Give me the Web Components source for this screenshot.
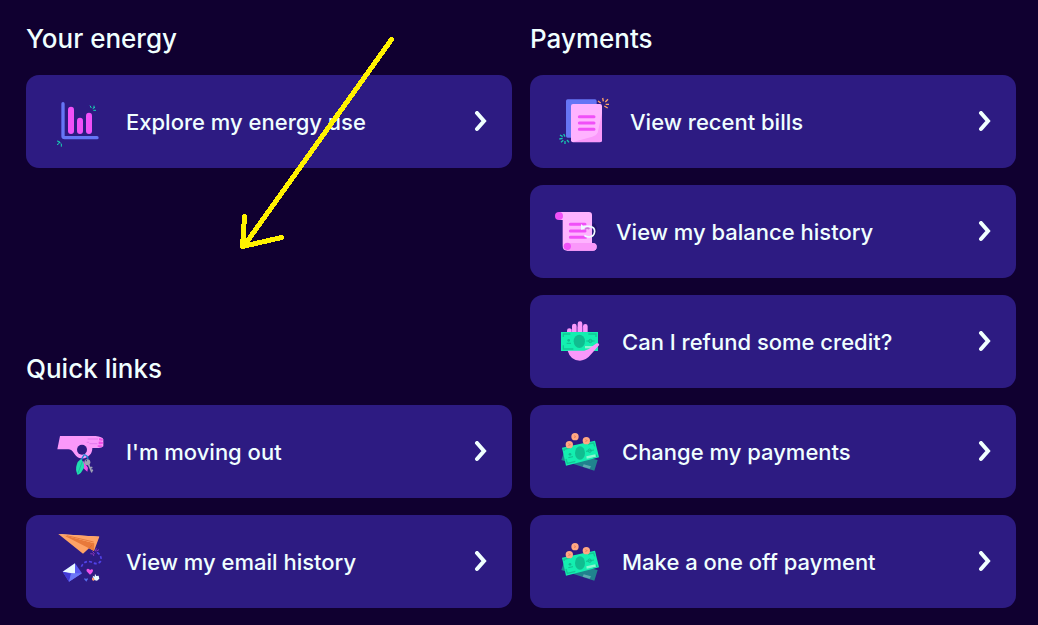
<!DOCTYPE html>
<html lang="en">
<head>
<meta charset="utf-8">
<meta name="viewport" content="width=device-width, initial-scale=1">
<title>My account</title>
<style>
  body {
    margin: 0;
    background: #100030;
    color: #f0ffff;
    font-family: Inter, "Open Sans", "Liberation Sans", sans-serif;
  }
</style>
</head>
<body>
<account-dashboard>
  <link-section slot="left" heading="Your energy">
    <link-card icon="chart">Explore my energy use</link-card>
  </link-section>
  <link-section slot="left" heading="Quick links">
    <link-card icon="keys">I'm moving out</link-card>
    <link-card icon="plane">View my email history</link-card>
  </link-section>
  <link-section slot="right" heading="Payments">
    <link-card icon="bills">View recent bills</link-card>
    <link-card icon="scroll">View my balance history</link-card>
    <link-card icon="refund">Can I refund some credit?</link-card>
    <link-card icon="cash">Change my payments</link-card>
    <link-card icon="cash">Make a one off payment</link-card>
  </link-section>
</account-dashboard>

<script>
// Artwork is drawn at 3 units per pixel
const ICONS = {
  chart: { width: 58, viewBox: '30 18 174 183', art: `
    <path d="M69 56V153Q69 158 74 158H171" fill="none" stroke="#6675f5" stroke-width="10" stroke-linecap="round" stroke-linejoin="round"/>
    <g fill="#f050f8">
      <rect x="84" y="65" width="18" height="82" rx="9"/>
      <rect x="111" y="98" width="18" height="49" rx="9"/>
      <rect x="138" y="83" width="18" height="64" rx="9"/>
    </g>
    <path d="M150 62L154 69M162 62V69M158 71L165 67M160 76H168M51 168L59 170M51 179L58 175M64 176V185M55 171L62 174" fill="none" stroke="#18d5b5" stroke-width="3"/>` },
  bills: { width: 58, viewBox: '27 18 174 183', art: `
    <rect x="63" y="43" width="92" height="115" rx="5" fill="#6675f5"/>
    <rect x="78" y="57" width="93" height="115" rx="6" fill="#ffb3ff"/>
    <path d="M171 84L158 143Q154 152 142 155L84 171H165Q171 171 171 165Z" fill="#fa98fa"/>
    <path d="M103 95H147M103 114H147M103 133H147" stroke="#f050f8" stroke-width="9" stroke-linecap="round"/>
    <path d="M159 48L167 54M173 39L175 49M189 43L181 51M182 58H192M178 63L188 69" stroke="#ffa366" stroke-width="4"/>
    <path d="M45 150L53 155M56 147L60 155M43 162L53 160M48 172L55 166M60 168V177M66 165L72 172" stroke="#18c5b0" stroke-width="4"/>` },
  scroll: { width: 44, viewBox: '27 18 132 183', art: `
    <path d="M42 51H132Q141 51 141 60V145H143Q155 145 155 155Q155 167 143 167H66Q53 167 53 153V75H42Z" fill="#ffb3ff"/>
    <path d="M67 144H144Q155 145 155 155Q155 167 143 167H66Z" fill="#fa98fa"/>
    <circle cx="42" cy="63" r="12" fill="#f050f8"/>
    <circle cx="67" cy="154" r="11" fill="#f050f8"/>
    <path d="M76 88H120M76 108H120M76 127H122" stroke="#f050f8" stroke-width="9" stroke-linecap="round"/>
    <path d="M145 86Q158 105 146 122" fill="none" stroke="#24136b" stroke-width="8"/>
    <path d="M115 94H134Q149 96 149 109Q148 124 133 126Q123 126 118 121" fill="none" stroke="#effcff" stroke-width="5"/>
    <path d="M108 87V104L124 101Z" fill="#effcff"/>
    <path d="M120 103Q127 96 133 102" fill="none" stroke="#ca78d7" stroke-width="5"/>` },
  refund: { width: 50, viewBox: '27 18 150 183', art: `
    <path d="M73 77V90M88 63V90M105 56V90M121 64V90" stroke="#fa98fa" stroke-width="14" stroke-linecap="round"/>
    <path d="M80 72V85M97 65V85M114 65V85" stroke="#d86bea" stroke-width="2"/>
    <rect x="48" y="81" width="111" height="57" fill="#14efb0"/>
    <path d="M55 96V87H76M130 87H153V96M55 121V132H85" fill="none" stroke="#12c795" stroke-width="4"/>
    <ellipse cx="103" cy="109" rx="17" ry="20" fill="#10bd90"/>
    <circle cx="71" cy="106" r="4" fill="#10bd90"/>
    <path d="M65 115H78M124 108H149" stroke="#10bd90" stroke-width="3"/>
    <circle cx="136" cy="108" r="5" fill="none" stroke="#10bd90" stroke-width="3"/>
    <path d="M120 123H146V130H120Z" fill="#8cf5d0"/>
    <path d="M68 137H118Q132 135 142 124L155 115Q164 114 162 121L139 147Q124 166 105 167Q76 166 68 137Z" fill="#fa98fa"/>` },
  keys: { width: 58, viewBox: '30 18 174 183', art: `
    <path d="M60 63H167Q187 65 190 73V94Q186 99 176 99H157Q157 113 149 120Q138 132 123 130Q111 128 103 116Q95 103 85 103H52Z" fill="#fa98fa"/>
    <circle cx="126" cy="104" r="15" fill="#2d1b82"/>
    <path d="M143 72H174M148 86H172M140 82H147" stroke="#d86bea" stroke-width="2"/>
    <path d="M177 70Q188 69 190 75Q187 79 177 76M176 80Q190 79 190 85Q186 89 176 87M173 91Q188 89 188 94Q184 97 173 95" fill="#ee50e7"/>
    <path d="M131 119Q143 120 144 133M124 137Q126 127 132 121" fill="none" stroke="#1688d0" stroke-width="4"/>
    <path d="M129 137L144 158L142 170L127 157Z" fill="#f050e8"/>
    <path d="M123 132Q137 148 130 162Q125 174 113 180Q105 164 110 150Q113 138 123 132Z" fill="#20deb0"/>
    <path d="M127 140L114 174" stroke="#19bb9d" stroke-width="3"/>
    <circle cx="142" cy="142" r="9" fill="#9da1b5"/>
    <circle cx="139" cy="137" r="2" fill="#2d1b82"/>
    <path d="M145 147L156 172M150 160L157 157M153 167L159 165" stroke="#9da1b5" stroke-width="5"/>` },
  plane: { width: 58, viewBox: '30 30 174 183', art: `
    <path d="M55 39L178 47L162 90L147 82L129 98Z" fill="#ffa366"/>
    <path d="M55 39L178 47L144 66Z" fill="#ffb17a"/>
    <path d="M69 42L163 67L162 90L147 82Z" fill="#e8793b"/>
    <path d="M69 42L178 47L163 67Z" fill="#ffa366"/>
    <path d="M80 44L161 63M147 82L156 72" stroke="#d9662a" stroke-width="2"/>
    <path d="M157 91L164 98M169 82L166 91M151 98L159 99M169 90L177 86M161 98V105" stroke="#8736b8" stroke-width="3"/>
    <path d="M171 94Q187 105 182 120Q174 134 154 123Q132 116 123 140" fill="none" stroke="#5142e8" stroke-width="5" stroke-dasharray="9 6"/>
    <path d="M68 152L105 127L126 157L87 182Z" fill="#5a59ef"/>
    <path d="M68 152L105 127L105 158Z" fill="#eafaff"/>
    <path d="M68 152L93 158L87 182Z" fill="#4239d5"/>
    <path d="M93 158L105 157L126 157L87 182Z" fill="#6c78f6"/>
    <path d="M150 161L140 151Q138 143 144 143Q149 144 150 148Q154 142 159 146Q160 153 150 161Z" fill="#f050e8"/>
    <path d="M139 182L132 174Q134 170 138 174Q143 169 144 174Z" fill="#566bea"/>
    <path d="M162 177L158 164L164 167L165 158L169 165L176 164L178 173L171 179Z" fill="#eafaff"/>
    <path d="M156 169L164 174L161 180L156 177Z" fill="#ff9770"/>` },
  cash: { width: 50, viewBox: '27 18 150 183', art: `
    <path d="M58 109L158 135L148 167L49 135Z" fill="#20828e"/>
    <path d="M116 148L138 154L134 161L113 155Z" fill="#5cabb0"/>
    <path d="M51 98L150 77L162 127L63 152Z" fill="#14efb0"/>
    <path d="M58 108L57 103L74 99M129 87L146 84L149 94M63 132L67 145L91 139M153 119L155 123L143 127" fill="none" stroke="#12c795" stroke-width="4"/>
    <ellipse cx="105" cy="114" rx="15" ry="20" fill="#10bd90"/>
    <circle cx="75" cy="118" r="4" fill="#10bd90"/>
    <path d="M70 128L84 125M123 109L147 105" stroke="#10bd90" stroke-width="3"/>
    <circle cx="134" cy="107" r="5" fill="none" stroke="#10bd90" stroke-width="3"/>
    <path d="M124 124L151 118L153 125L125 131Z" fill="#8cf5d0"/>
    <g fill="#ffa783">
      <circle cx="90" cy="65" r="11"/><circle cx="73" cy="89" r="11"/><circle cx="124" cy="77" r="11"/>
    </g>
    <path d="M87 62L93 65L87 68M70 86L76 89L70 92M121 74L127 77L121 80" fill="none" stroke="#ed825f" stroke-width="3"/>` },
};

class LinkCard extends HTMLElement {
  constructor() {
    super();
    this.attachShadow({ mode: 'open' });
  }

  connectedCallback() {
    const icon = ICONS[this.getAttribute('icon')];
    this.shadowRoot.innerHTML = `
      <style>
        :host { display: block; }

        a {
          display: flex;
          align-items: center;
          gap: 18px;
          box-sizing: border-box;
          min-height: 93px;
          padding: 16px 24px;
          border-radius: 13px;
          background: #2d1b82;
          color: inherit;
          font-size: 22px;
          font-weight: 500;
          line-height: 28px;
          text-decoration: none;
        }

        a:hover { background: #38249a; }
        svg { flex: none; display: block; }
        .label { flex: 1; }
      </style>
      <a href="#">
        <svg width="${icon.width}" height="61" viewBox="${icon.viewBox}" aria-hidden="true">${icon.art}</svg>
        <span class="label"><slot></slot></span>
        <svg width="14" height="21" viewBox="0 0 14 21" aria-hidden="true">
          <path d="M3 2L10 10L3 18" fill="none" stroke="#f0ffff" stroke-width="4" stroke-linecap="round"/>
        </svg>
      </a>
    `;
  }
}

class LinkSection extends HTMLElement {
  constructor() {
    super();
    this.attachShadow({ mode: 'open' });
  }

  connectedCallback() {
    this.shadowRoot.innerHTML = `
      <style>
        :host { display: block; }

        h2 {
          margin: 0 0 20px;
          font-size: 26px;
          font-weight: 500;
          line-height: 32px;
        }

        .cards {
          display: flex;
          flex-direction: column;
          gap: 17px;
        }
      </style>
      <h2>${this.getAttribute('heading')}</h2>
      <div class="cards"><slot></slot></div>
    `;
  }
}

class AccountDashboard extends HTMLElement {
  constructor() {
    super();
    this.attachShadow({ mode: 'open' });
  }

  connectedCallback() {
    this.shadowRoot.innerHTML = `
      <style>
        :host {
          display: block;
          position: relative;
        }

        main {
          display: grid;
          grid-template-columns: 1fr 1fr;
          gap: 18px;
          padding: 23px 22px 17px 26px;
        }

        .column {
          display: flex;
          flex-direction: column;
          justify-content: space-between;
        }

        /* Hand-drawn pointer over the page */
        .pointer {
          position: absolute;
          top: 0;
          left: 0;
          pointer-events: none;
        }
      </style>
      <main>
        <div class="column"><slot name="left"></slot></div>
        <div class="column"><slot name="right"></slot></div>
      </main>
      <svg class="pointer" width="400" height="260" viewBox="0 0 400 260" aria-hidden="true">
        <path d="M391.500 39.500L243.500 246.500M244.500 216.500L242.500 246.500L281.500 237.500" fill="none" stroke="#fff200" stroke-width="5" stroke-linecap="round" stroke-linejoin="round" shape-rendering="crispEdges"/>
      </svg>
    `;
  }
}

customElements.define('link-card', LinkCard);
customElements.define('link-section', LinkSection);
customElements.define('account-dashboard', AccountDashboard);
</script>
</body>
</html>
